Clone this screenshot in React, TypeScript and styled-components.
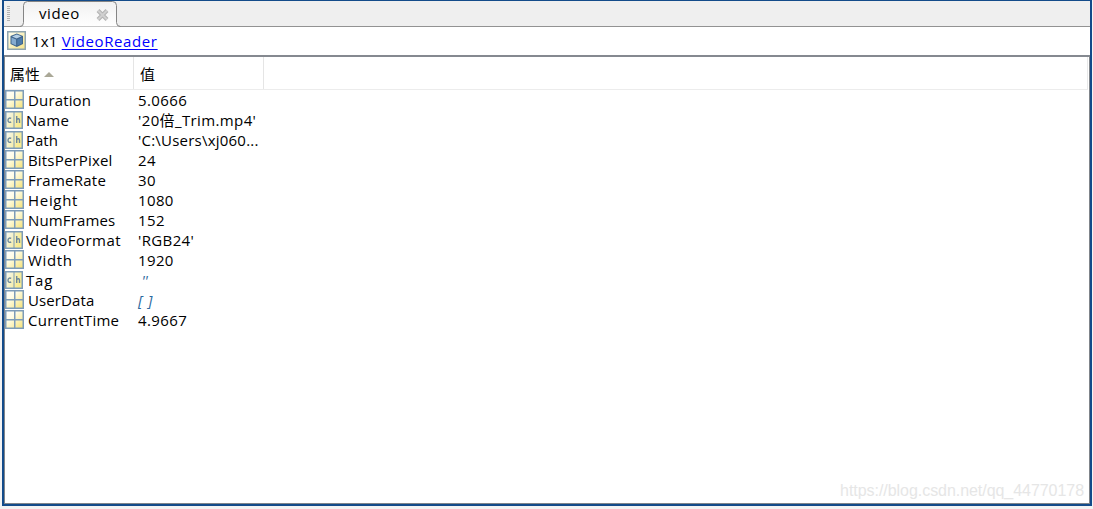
import styled, { createGlobalStyle, css } from 'styled-components';

const GlobalStyle = createGlobalStyle`
  * {
    box-sizing: border-box;
  }

  body {
    margin: 0;
    background: #f3f3f3;
    overflow: hidden;
  }
`;

const StyledWrapper = styled.div`
  height: 509px;
  padding: 0 1px 3px 2px;
  color: #000;
  font-family: 'Open Sans', 'Noto Sans CJK SC', sans-serif;
  font-size: 15px;
  line-height: 20px;
  white-space: pre;
`;

const StyledWindow = styled.div`
  position: relative;
  display: flex;
  flex-direction: column;
  height: 506px;
  border: solid #134b8a;
  border-width: 1px 2px 2px;
  background: #fff;
`;

const StyledTabBar = styled.div`
  display: flex;
  flex: none;
  height: 26px;
  padding-left: 3px;
  border-bottom: 1px solid #929292;
  background: #efefef;
`;

const StyledGrip = styled.div`
  width: 3px;
  height: 15px;
  margin: 5px 10px 0 0;
  background: repeating-linear-gradient(#b2b2b2 0 1px, #efefef 1px 2px);
`;

const StyledTab = styled.div`
  display: flex;
  position: relative;
  width: 101px;
  height: 26px;
  padding: 2px 0 0 19px;
`;

const StyledTabShape = styled.svg`
  position: absolute;
  left: 0;
  top: 0;
`;

const StyledTabTitle = styled.span`
  position: relative;
  width: 57px;
  letter-spacing: 0.6px;
`;

const StyledClose = styled.svg`
  position: relative;
  margin-top: 6px;
`;

const StyledInfoBar = styled.div`
  display: flex;
  flex: none;
  height: 28px;
  padding: 4px 0 0 3px;
`;

const StyledSummary = styled.span`
  margin-left: 6px;
  letter-spacing: 0.2px;
`;

const StyledLink = styled.a`
  color: #0000ff;
  letter-spacing: 0.62px;
  text-decoration: underline;
  text-decoration-thickness: 1px;
  text-underline-offset: 2px;
`;

const StyledTable = styled.div`
  flex: 1;
  border: 1px solid #80858b;
  border-top: 2px solid #858990;
`;

const StyledHeader = styled.div`
  display: flex;
  height: 33px;
  margin-right: 1px;
  border-right: 1px solid #e8e8e8;
  border-bottom: 1px solid #ececec;
`;

const StyledHeaderCell = styled.div<{ $width: number }>`
  display: flex;
  width: ${({ $width }) => $width}px;
  padding: 7px 0 0 5px;
  border-right: 1px solid #e5e5e5;

  & + & {
    padding-left: 6px;
  }
`;

const StyledSortArrow = styled.svg`
  margin: 8px 0 0 4px;
`;

const StyledRow = styled.div`
  display: flex;
  height: 20px;
`;

const StyledName = styled.span<{ $char: boolean; $spacing: number }>`
  width: ${({ $char }) => ($char ? 112 : 110)}px;
  margin-left: ${({ $char }) => ($char ? 3 : 4)}px;
  letter-spacing: ${({ $spacing }) => $spacing}px;
`;

const StyledValue = styled.span<{ $empty?: boolean; $spacing: number }>`
  letter-spacing: ${({ $spacing }) => $spacing}px;

  ${({ $empty }) =>
    $empty &&
    css`
      color: #2c699e;
      font-style: italic;
    `}
`;

const StyledWatermark = styled.div`
  position: absolute;
  right: 6px;
  bottom: 3px;
  color: #e6e6e6;
  font-family: 'Liberation Sans', sans-serif;
  font-size: 16px;
  letter-spacing: -0.05px;
`;

type Property = {
  name: string;
  value: string;
  char?: boolean;
  empty?: boolean;
  spacing?: number;
  valueSpacing?: number;
};

const properties: Property[] = [
  { name: 'Duration', value: '5.0666', spacing: 0.15 },
  { name: 'Name', value: "'20倍_Trim.mp4'", char: true, spacing: 0.3, valueSpacing: 0.38 },
  { name: 'Path', value: "'C:\\Users\\xj060...", char: true, valueSpacing: 0.22 },
  { name: 'BitsPerPixel', value: '24', spacing: 0.18 },
  { name: 'FrameRate', value: '30', spacing: 0.25 },
  { name: 'Height', value: '1080', spacing: 0.7 },
  { name: 'NumFrames', value: '152', spacing: 0.15 },
  { name: 'VideoFormat', value: "'RGB24'", char: true, spacing: 0.48 },
  { name: 'Width', value: '1920', spacing: 0.65 },
  { name: 'Tag', value: " ''", char: true, empty: true, spacing: 0.8, valueSpacing: -0.3 },
  { name: 'UserData', value: '[ ]', empty: true, spacing: 0.1, valueSpacing: 0.9 },
  { name: 'CurrentTime', value: '4.9667', spacing: 0.28 },
];

const MatrixIcon = () => (
  <svg width="19" height="20" viewBox="0 0 19 20">
    <defs>
      <linearGradient id="cell" x2="1" y2="1">
        <stop stopColor="#ffffff" />
        <stop offset="0.35" stopColor="#fffde6" />
        <stop offset="1" stopColor="#f5e27c" />
      </linearGradient>
    </defs>
    <path fill="#7d9cb8" d="M0 0h19v19H0z" />
    <path fill="url(#cell)" d="M1.5 1.5H9V9H1.5zM10.5 1.5h7V9h-7zM1.5 10.5H9v7H1.5zM10.5 10.5h7v7h-7z" />
  </svg>
);

const CharIcon = () => (
  <svg width="18" height="20" viewBox="0 -1 18 20">
    <defs>
      <linearGradient id="char" x2="1" y2="0.4">
        <stop stopColor="#f4f7f2" />
        <stop offset="1" stopColor="#f8eb8e" />
      </linearGradient>
    </defs>
    <path fill="#7d9cb8" d="M0 0h18v18H0z" />
    <path fill="url(#char)" d="M1.5 1.5h7v15h-7zM9.5 1.5h7v15h-7z" />
    <path
      fill="none"
      stroke="#6f8a9b"
      strokeWidth="1.4"
      d="M6.2 7.4C4.4 6.6 3 7.3 3 9.2s1.4 2.6 3.2 1.8M11.7 5v7M11.7 8.5c1.4-1.3 2.8-.9 2.8.8V12"
    />
  </svg>
);

const CubeIcon = () => (
  <svg width="19" height="19" viewBox="0 0 19 19">
    <defs>
      <linearGradient id="tile" x2="1" y2="1">
        <stop stopColor="#fffef0" />
        <stop offset="1" stopColor="#f6e48c" />
      </linearGradient>
    </defs>
    <path fill="#8fa5b0" d="M0 0h19v19H0z" />
    <path fill="url(#tile)" d="M1.5 1.5h16v16h-16z" />
    <path fill="#3f648c" d="M9.8 2.5 16 5v8l-6.2 3L3.5 13V5z" />
    <path fill="#b5d0e6" d="m9.8 3.5 4.7 1.8-4.9 2.2L5 5.6z" />
    <path fill="#85abd0" d="m4.5 6.6 4.6 2v6L4.5 12.4z" />
    <path fill="#4d7bab" d="M10.3 8.6 15 6.5v5.9l-4.7 2.2z" />
  </svg>
);

const App = () => (
  <StyledWrapper>
    <GlobalStyle />
    <StyledWindow>
      <StyledTabBar>
        <StyledGrip />
        <StyledTab>
          <StyledTabShape width="101" height="26" viewBox="0 0 101 26">
            <defs>
              <linearGradient id="tab" x2="0" y2="1">
                <stop stopColor="#f1f1f1" />
                <stop offset="1" stopColor="#fff" />
              </linearGradient>
            </defs>
            <path
              fill="url(#tab)"
              stroke="#858585"
              d="M0 25.5q3.5 0 3.5-4v-17q0-4 4-4h85q4 0 4 4v17q0 4 4 4"
            />
          </StyledTabShape>
          <StyledTabTitle>video</StyledTabTitle>
          <StyledClose width="13" height="12" viewBox="0 0 13 12">
            <path stroke="#b3b3b3" strokeWidth="4" d="m2 1.5 9 9M11 1.5l-9 9" />
            <path stroke="#d0d0d0" strokeWidth="2" d="m2 1.5 9 9M11 1.5l-9 9" />
          </StyledClose>
        </StyledTab>
      </StyledTabBar>
      <StyledInfoBar>
        <CubeIcon />
        <StyledSummary>
          1x1 <StyledLink>VideoReader</StyledLink>
        </StyledSummary>
      </StyledInfoBar>
      <StyledTable>
        <StyledHeader>
          <StyledHeaderCell $width={129}>
            属性
            <StyledSortArrow width="10" height="6" viewBox="0 0 10 6">
              <path fill="#aaa897" d="m5 0 5 5H0z" />
            </StyledSortArrow>
          </StyledHeaderCell>
          <StyledHeaderCell $width={130}>值</StyledHeaderCell>
        </StyledHeader>
        {properties.map(({ name, value, char = false, empty, spacing = 0, valueSpacing = 0.38 }) => (
          <StyledRow key={name}>
            {char ? <CharIcon /> : <MatrixIcon />}
            <StyledName $char={char} $spacing={spacing}>
              {name}
            </StyledName>
            <StyledValue $empty={empty} $spacing={valueSpacing}>
              {value}
            </StyledValue>
          </StyledRow>
        ))}
      </StyledTable>
      <StyledWatermark>https://blog.csdn.net/qq_44770178</StyledWatermark>
    </StyledWindow>
  </StyledWrapper>
);

export default App;
